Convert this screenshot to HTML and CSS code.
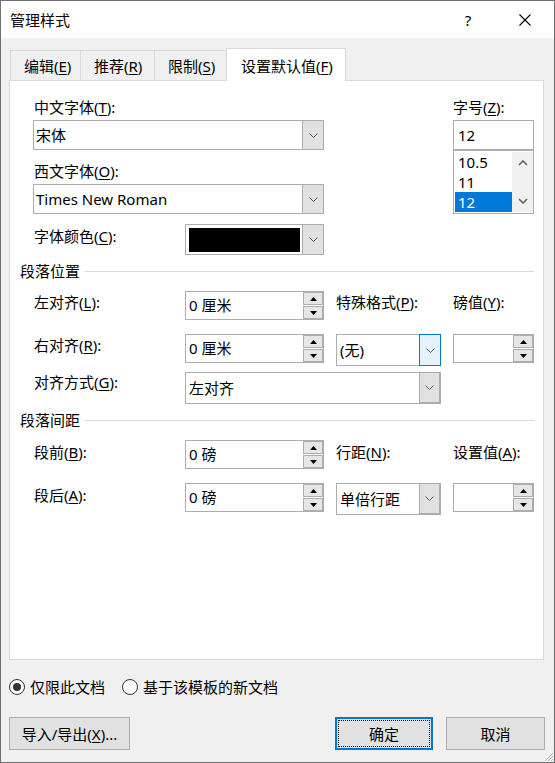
FILE: index.html
```html
<!DOCTYPE html>
<html lang="zh-CN">
<head>
<meta charset="utf-8">
<title>管理样式</title>
<link rel="stylesheet" href="styles.css">
</head>
<body>
<div class="window">
  <div class="titlebar">
    <span class="title">管理样式</span>
    <span class="help">?</span>
    <span class="close"><svg width="12" height="12" viewBox="0 0 12 12"><path d="M0.5 0.5L11.5 11.5M11.5 0.5L0.5 11.5" stroke="#000" stroke-width="1.1" fill="none"/></svg></span>
  </div>
  <div class="dlg">
    <div class="tabs">
      <div class="tab t1">编辑(<u>E</u>)</div>
      <div class="tab t2">推荐(<u>R</u>)</div>
      <div class="tab t3">限制(<u>S</u>)</div>
      <div class="tab active">设置默认值(<u>F</u>)</div>
    </div>
    <div class="panel">
      <div class="fonts">
        <div class="fcol-left">
          <div class="lbl">中文字体(<u>T</u>):</div>
          <div class="combo wide gap3"><span class="val v2">宋体</span><span class="dd"><svg width="9" height="5" viewBox="0 0 9 5"><path d="M0.5 0.5L4.5 4.5L8.5 0.5" fill="none" stroke="#606060"/></svg></span></div>
          <div class="lbl mt11">西文字体(<u>O</u>):</div>
          <div class="combo wide gap3"><span class="val v2">Times New Roman</span><span class="dd"><svg width="9" height="5" viewBox="0 0 9 5"><path d="M0.5 0.5L4.5 4.5L8.5 0.5" fill="none" stroke="#606060"/></svg></span></div>
          <div class="colorrow">
            <div class="lbl mt2">字体颜色(<u>C</u>):</div>
            <div class="combo colorcombo"><span class="swatch"></span><span class="dd"><svg width="9" height="5" viewBox="0 0 9 5"><path d="M0.5 0.5L4.5 4.5L8.5 0.5" fill="none" stroke="#606060"/></svg></span></div>
          </div>
        </div>
        <div class="fcol-right">
          <div class="lbl">字号(<u>Z</u>):</div>
          <div class="sizeinput">12</div>
          <div class="sizelist">
            <div class="items">
              <div class="item">10.5</div>
              <div class="item">11</div>
              <div class="item selected">12</div>
            </div>
            <div class="vscroll">
              <svg width="10" height="6" viewBox="0 0 10 6"><path d="M1 5L5 1L9 5" fill="none" stroke="#606060" stroke-width="1.6"/></svg>
              <svg width="10" height="6" viewBox="0 0 10 6"><path d="M1 1L5 5L9 1" fill="none" stroke="#606060" stroke-width="1.6"/></svg>
            </div>
          </div>
        </div>
      </div>

      <div class="sect">段落位置</div>
      <div class="prow mt10">
        <div class="lbl mt1">左对齐(<u>L</u>):</div>
        <div class="spin c2"><span class="val">0 厘米</span><span class="btns"><span class="sb"><svg width="7" height="4" viewBox="0 0 7 4"><path d="M3.5 0L7 4H0Z"/></svg></span><span class="sb"><svg width="7" height="4" viewBox="0 0 7 4"><path d="M0 0H7L3.5 4Z"/></svg></span></span></div>
        <div class="lbl mt1 c4">特殊格式(<u>P</u>):</div>
        <div class="lbl mt1 c6">磅值(<u>Y</u>):</div>
      </div>
      <div class="prow mt14">
        <div class="lbl mt1">右对齐(<u>R</u>):</div>
        <div class="spin c2"><span class="val">0 厘米</span><span class="btns"><span class="sb"><svg width="7" height="4" viewBox="0 0 7 4"><path d="M3.5 0L7 4H0Z"/></svg></span><span class="sb"><svg width="7" height="4" viewBox="0 0 7 4"><path d="M0 0H7L3.5 4Z"/></svg></span></span></div>
        <div class="combo tall c4"><span class="val">(无)</span><span class="dd focus"><svg width="9" height="5" viewBox="0 0 9 5"><path d="M0.5 0.5L4.5 4.5L8.5 0.5" fill="none" stroke="#606060"/></svg></span></div>
        <div class="spin c6"><span class="val"></span><span class="btns"><span class="sb"><svg width="7" height="4" viewBox="0 0 7 4"><path d="M3.5 0L7 4H0Z"/></svg></span><span class="sb"><svg width="7" height="4" viewBox="0 0 7 4"><path d="M0 0H7L3.5 4Z"/></svg></span></span></div>
      </div>
      <div class="prow mt6">
        <div class="lbl">对齐方式(<u>G</u>):</div>
        <div class="combo tall c24"><span class="val">左对齐</span><span class="dd ro"><svg width="9" height="5" viewBox="0 0 9 5"><path d="M0.5 0.5L4.5 4.5L8.5 0.5" fill="none" stroke="#606060"/></svg></span></div>
      </div>

      <div class="sect">段落间距</div>
      <div class="prow mt10">
        <div class="lbl mt2">段前(<u>B</u>):</div>
        <div class="spin c2"><span class="val">0 磅</span><span class="btns"><span class="sb"><svg width="7" height="4" viewBox="0 0 7 4"><path d="M3.5 0L7 4H0Z"/></svg></span><span class="sb"><svg width="7" height="4" viewBox="0 0 7 4"><path d="M0 0H7L3.5 4Z"/></svg></span></span></div>
        <div class="lbl mt2 c4">行距(<u>N</u>):</div>
        <div class="lbl mt2 c6">设置值(<u>A</u>):</div>
      </div>
      <div class="prow mt14">
        <div class="lbl mt2">段后(<u>A</u>):</div>
        <div class="spin c2"><span class="val">0 磅</span><span class="btns"><span class="sb"><svg width="7" height="4" viewBox="0 0 7 4"><path d="M3.5 0L7 4H0Z"/></svg></span><span class="sb"><svg width="7" height="4" viewBox="0 0 7 4"><path d="M0 0H7L3.5 4Z"/></svg></span></span></div>
        <div class="combo tall c4"><span class="val">单倍行距</span><span class="dd ro"><svg width="9" height="5" viewBox="0 0 9 5"><path d="M0.5 0.5L4.5 4.5L8.5 0.5" fill="none" stroke="#606060"/></svg></span></div>
        <div class="spin c6"><span class="val"></span><span class="btns"><span class="sb"><svg width="7" height="4" viewBox="0 0 7 4"><path d="M3.5 0L7 4H0Z"/></svg></span><span class="sb"><svg width="7" height="4" viewBox="0 0 7 4"><path d="M0 0H7L3.5 4Z"/></svg></span></span></div>
      </div>
    </div>

    <div class="radios">
      <span class="radio checked"></span><span class="rlabel">仅限此文档</span>
      <span class="radio r2"></span><span class="rlabel">基于该模板的新文档</span>
    </div>

    <div class="buttons">
      <div class="btn b-io">导入/导出(<u>X</u>)...</div>
      <div class="btn b-ok">确定</div>
      <div class="btn b-cancel">取消</div>
    </div>
  </div>
  <svg class="grip" width="12" height="12" viewBox="0 0 12 12"><path d="M11 3L3 11M11 6L6 11M11 9L9 11" stroke="#b4b4b4" stroke-width="1" fill="none"/></svg>
</div>
</body>
</html>
```

FILE: styles.css
```css
* { box-sizing: border-box; }
html, body { margin: 0; padding: 0; background: #fff; }
body {
  font-family: "Noto Sans", "Noto Sans CJK SC", sans-serif;
  font-size: 15px;
  line-height: 20px;
  color: #000;
}
u { text-decoration: underline; text-underline-offset: 2px; text-decoration-thickness: 1px; }

.window {
  width: 555px;
  height: 763px;
  border: 1px solid #6f6f6f;
  background: #f0f0f0;
  position: relative;
  overflow: hidden;
}

.titlebar {
  height: 37px;
  background: #fff;
  display: flex;
  align-items: center;
  padding-left: 9px;
}
.title { flex: 1; }
.help { width: 20px; text-align: center; margin-right: 37px; }
.close { width: 20px; display: flex; justify-content: center; margin-right: 19px; }

.dlg { padding: 10px 9px 0 8px; }

.tabs {
  display: flex;
  align-items: flex-end;
  height: 32px;
  padding-left: 1px;
}
.tab {
  height: 30px;
  border: 1px solid #d9d9d9;
  border-bottom: none;
  border-right: none;
  padding: 5px 0 0 13px;
  background: #f0f0f0;
  white-space: nowrap;
}
.t1 { width: 70px; }
.t2 { width: 74px; }
.t3 { width: 72px; }
.tab.active {
  width: 120px;
  height: 33px;
  margin-bottom: -1px;
  background: #fff;
  border-right: 1px solid #d9d9d9;
  padding: 7px 0 0 14px;
  position: relative;
  z-index: 1;
}

.panel {
  width: 535px;
  height: 580px;
  border: 1px solid #d9d9d9;
  background: #fff;
}

.lbl { height: 20px; line-height: 20px; white-space: nowrap; }
.mt1 { margin-top: 1px; }
.mt2 { margin-top: 2px; }
.mt6 { margin-top: 6px; }
.mt10 { margin-top: 10px; }
.mt11 { margin-top: 11px; }
.mt14 { margin-top: 14px; }

.fonts { display: flex; padding: 16px 0 0 23px; }
.fcol-left { width: 291px; }
.fcol-left > .lbl { padding-left: 1px; }
.fcol-right { width: 81px; margin-left: 129px; }

.combo {
  display: flex;
  height: 30px;
  border: 1px solid #adadad;
  background: #fff;
}
.combo.wide { width: 291px; }
.combo.tall { height: 32px; }
.gap3 { margin-top: 3px; }
.combo .val {
  flex: 1;
  display: flex;
  align-items: center;
  padding-left: 3px;
  white-space: nowrap;
}
.combo .val.v2 { padding-left: 2px; }
.dd {
  width: 21px;
  background: #e1e1e1;
  border-left: 1px solid #adadad;
  display: flex;
  align-items: center;
  justify-content: center;
  flex: none;
}
.dd.focus {
  width: 22px;
  margin: -1px -1px -1px 0;
  background: #e5f1fb;
  border: 1px solid #0078d7;
}
.dd.ro {
  width: 22px;
  margin: -1px -1px -1px 0;
  background: #e1e1e1;
  border: 1px solid #adadad;
  border-right-width: 2px;
  border-bottom-width: 2px;
}

.colorrow {
  display: flex;
  justify-content: space-between;
  align-items: flex-start;
  height: 31px;
  margin-top: 10px;
  padding-left: 1px;
}
.colorcombo { width: 139px; height: 31px; }
.swatch {
  width: 111px;
  margin: 3px 2px 2px 3px;
  background: #000;
}
.colorcombo .dd { margin-left: auto; }

.sizeinput {
  margin-top: 3px;
  height: 30px;
  border: 1px solid #adadad;
  background: #fff;
  padding-left: 4px;
  line-height: 28px;
}
.sizelist {
  height: 64px;
  border: 1px solid #adadad;
  background: #fff;
  padding: 1px 0 1px 1px;
  display: flex;
}
.items { flex: 1; }
.item { height: 20px; line-height: 20px; padding-left: 3px; }
.item.selected { background: #0078d7; color: #fff; }
.vscroll {
  width: 21px;
  background: #f0f0f0;
  display: flex;
  flex-direction: column;
  align-items: center;
  justify-content: space-between;
  padding: 8px 0 8px;
}

.sect {
  display: flex;
  align-items: center;
  height: 20px;
  margin: 6px 9px 0 10px;
  white-space: nowrap;
}
.sect::after {
  content: "";
  flex: 1;
  height: 1px;
  background: #dcdcdc;
  margin-left: 5px;
}

.prow {
  display: grid;
  grid-template-columns: 151px 139px 12px 105px 12px 81px;
  align-items: start;
  margin-left: 24px;
}
.c2 { grid-column: 2; }
.c4 { grid-column: 4; }
.c6 { grid-column: 6; }
.c24 { grid-column: 2 / 5; }

.spin {
  display: flex;
  height: 29px;
  border: 1px solid #adadad;
  background: #fff;
}
.spin .val {
  flex: 1;
  padding-left: 3px;
  line-height: 27px;
  white-space: nowrap;
}
.btns {
  width: 20px;
  display: flex;
  flex-direction: column;
  gap: 1px;
}
.sb {
  flex: 1;
  background: #e6e6e6;
  border: 1px solid #adadad;
  display: flex;
  align-items: center;
  justify-content: center;
}

.radios {
  display: flex;
  align-items: center;
  height: 20px;
  margin-top: 17px;
}
.radio {
  width: 16px;
  height: 16px;
  border: 1px solid #333;
  border-radius: 50%;
  background: #fff;
  display: flex;
  align-items: center;
  justify-content: center;
  flex: none;
}
.radio.checked::after {
  content: "";
  width: 8px;
  height: 8px;
  border-radius: 50%;
  background: #333;
}
.radio.r2 { margin-left: 17px; }
.rlabel { margin-left: 5px; white-space: nowrap; }

.buttons {
  display: flex;
  margin-top: 20px;
}
.btn {
  height: 33px;
  border: 1px solid #adadad;
  background: #e1e1e1;
  display: flex;
  align-items: center;
  justify-content: center;
  white-space: nowrap;
}
.b-io { width: 121px; }
.b-ok {
  width: 98px;
  margin-left: auto;
  border: 2px solid #0078d7;
  outline: 1px dotted #000;
  outline-offset: -4px;
}
.b-cancel { width: 99px; margin-left: 13px; }

.grip { position: absolute; right: 0; bottom: 0; }
```
